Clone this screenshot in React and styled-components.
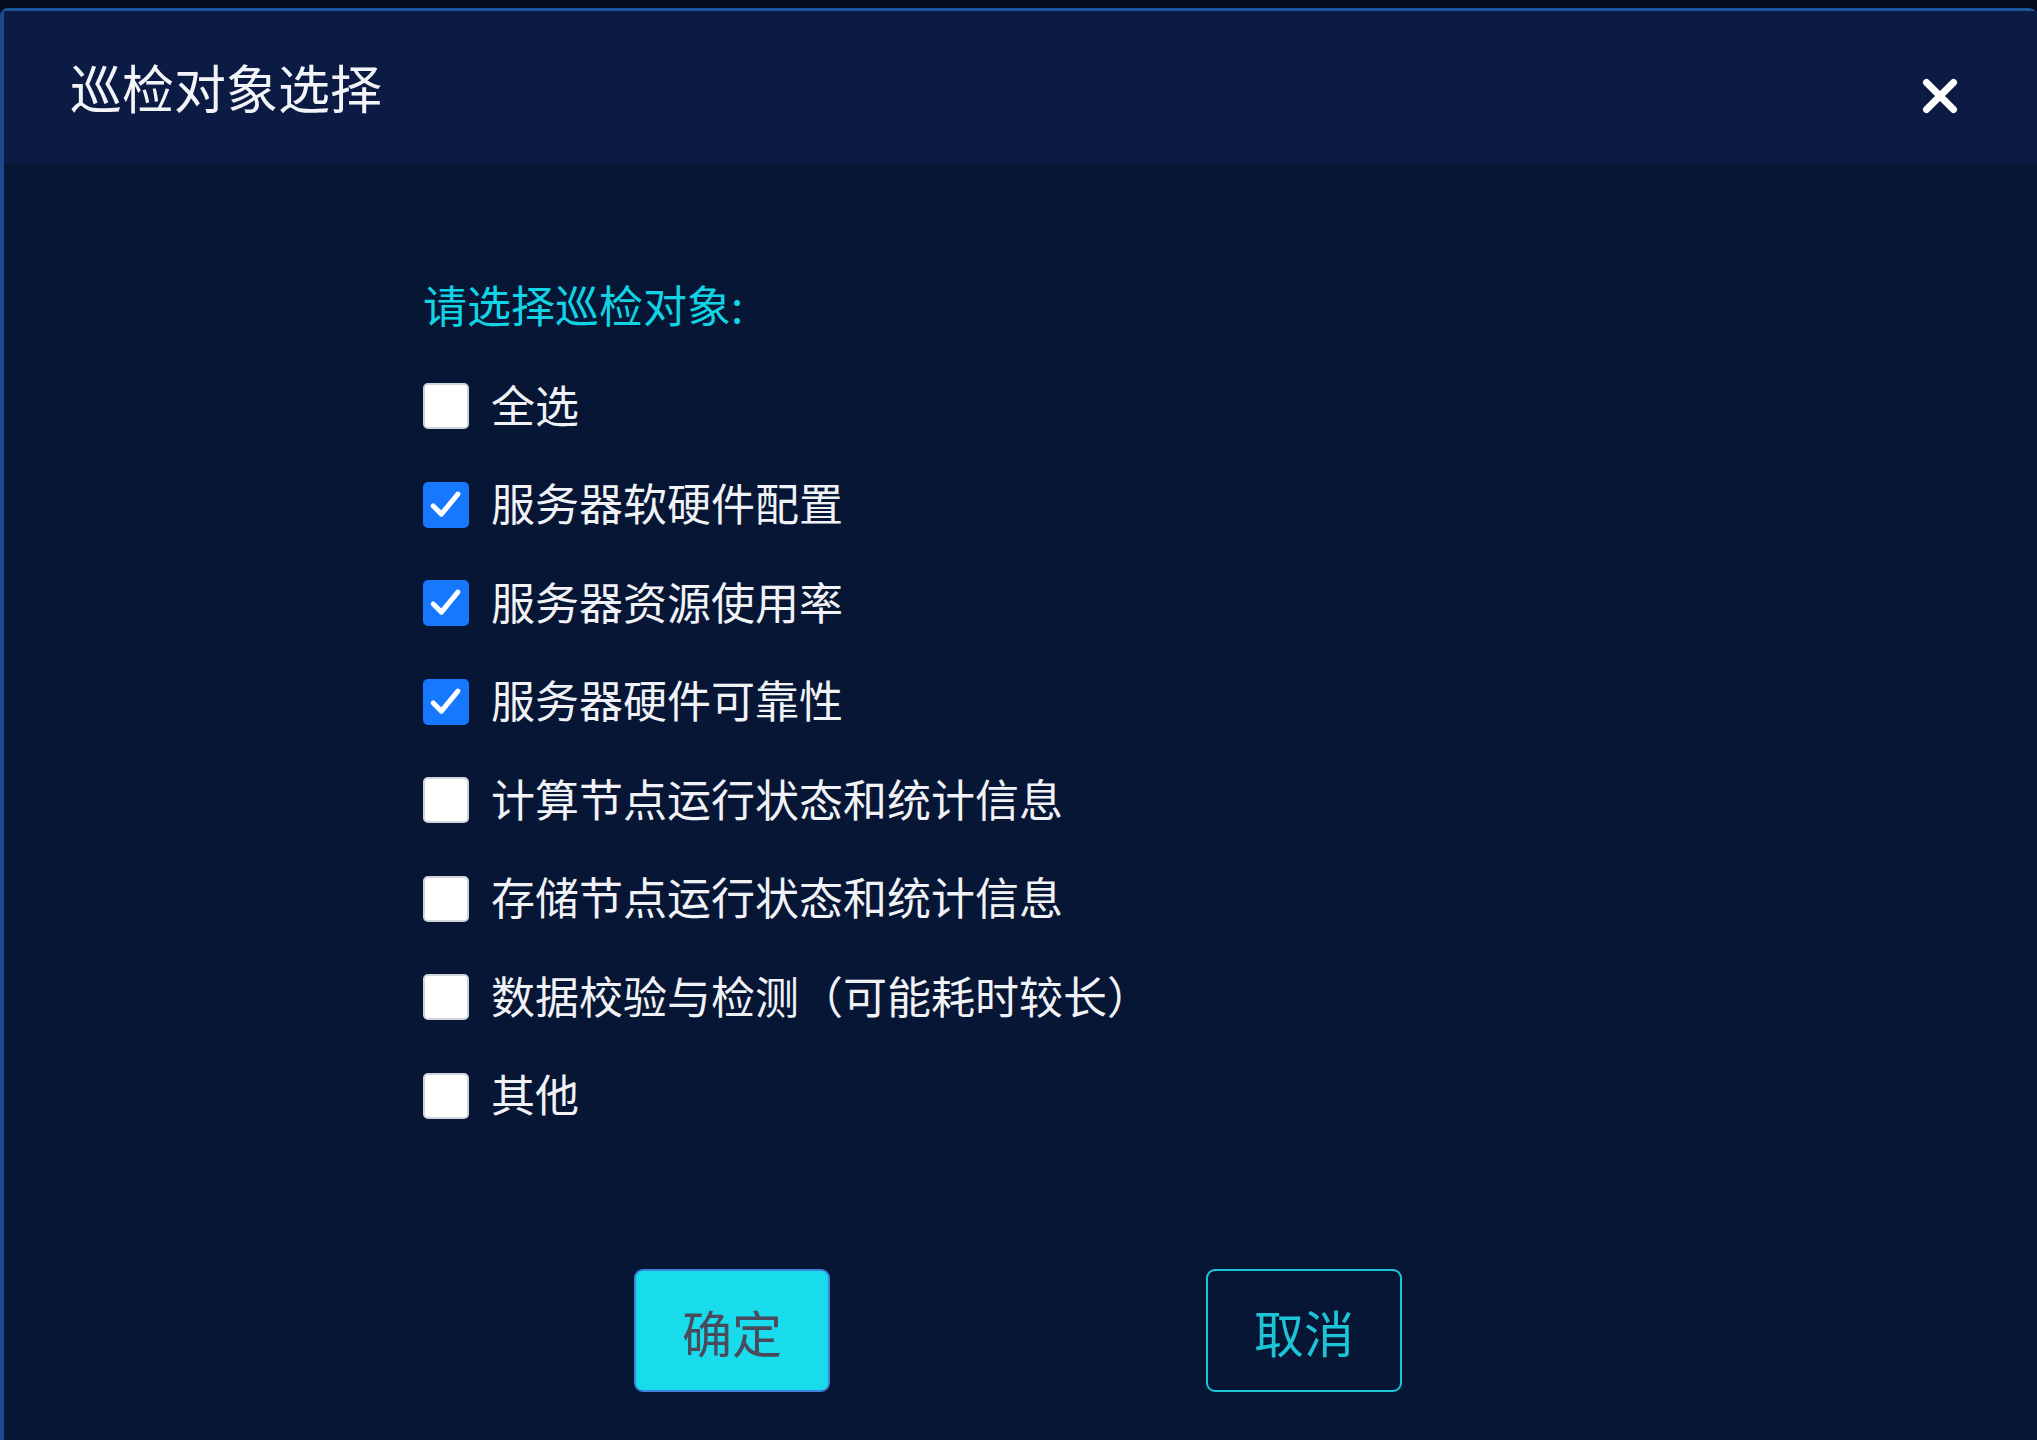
import React, { useState } from "react";
import styled, { createGlobalStyle } from "styled-components";

const GlobalStyle = createGlobalStyle`
  html, body {
    margin: 0;
    padding: 0;
    background: #030b1c;
    overflow: hidden;
  }
  * { box-sizing: border-box; }
  body {
    font-family: "Noto Sans CJK SC", "Noto Sans", "Liberation Sans", sans-serif;
  }
`;

const Page = styled.div`
  padding-top: 8px;
  min-height: 100vh;
`;

const Dialog = styled.section`
  display: flex;
  flex-direction: column;
  width: 100%;
  min-height: calc(100vh - 8px);
  background: #061634;
  border-top: 3px solid #1c569c;
  border-left: 4px solid #1a4b8c;
  border-top-left-radius: 8px;
  border-top-right-radius: 8px;
`;

const Header = styled.header`
  display: flex;
  align-items: center;
  justify-content: space-between;
  height: 152px;
  padding: 0 77px 0 66px;
  background: #0b1b44;
`;

const Title = styled.h2`
  margin: 0;
  font-size: 52px;
  line-height: 1;
  font-weight: 400;
  color: #f2f4f8;
`;

const CloseButton = styled.button`
  display: flex;
  align-items: center;
  justify-content: center;
  width: 40px;
  height: 40px;
  margin-top: 18px;
  padding: 0;
  border: none;
  background: transparent;
  cursor: pointer;
`;

const Body = styled.div`
  display: flex;
  flex-direction: column;
  padding-top: 111px;
`;

const Content = styled.div`
  display: flex;
  flex-direction: column;
  padding-left: 419px;
`;

const Prompt = styled.div`
  font-size: 44px;
  line-height: 60px;
  color: #12d3e4;
`;

const OptionList = styled.div`
  display: flex;
  flex-direction: column;
  margin-top: 23px;
`;

const OptionRow = styled.label`
  display: flex;
  align-items: center;
  height: 98.5px;
  cursor: pointer;
`;

const Box = styled.span`
  display: flex;
  align-items: center;
  justify-content: center;
  flex: none;
  width: 46px;
  height: 46px;
  border-radius: 5px;
  background: ${(p) => (p.$checked ? "#1677ff" : "#ffffff")};
  border: 2px solid ${(p) => (p.$checked ? "#1677ff" : "#cfd3da")};
`;

const OptionText = styled.span`
  margin-left: 22px;
  padding-bottom: 5px;
  font-size: 44px;
  line-height: 1;
  color: #f0f2f6;
  white-space: nowrap;
`;

const Footer = styled.div`
  display: flex;
  justify-content: center;
  gap: 376px;
  margin-top: 124px;
  padding-right: 5px;
`;

const ActionButton = styled.button`
  display: flex;
  align-items: center;
  justify-content: center;
  width: 196px;
  height: 123px;
  padding: 0;
  border-radius: 9px;
  font-family: inherit;
  font-size: 50px;
  cursor: pointer;
  background: ${(p) => (p.$primary ? "#18dcec" : "transparent")};
  color: ${(p) => (p.$primary ? "#4a4a5a" : "#1cc4d6")};
  border: 2px solid ${(p) => (p.$primary ? "#3a86dc" : "#1bc7d8")};
`;

const options = [
  { label: "全选", checked: false },
  { label: "服务器软硬件配置", checked: true },
  { label: "服务器资源使用率", checked: true },
  { label: "服务器硬件可靠性", checked: true },
  { label: "计算节点运行状态和统计信息", checked: false },
  { label: "存储节点运行状态和统计信息", checked: false },
  { label: "数据校验与检测（可能耗时较长）", checked: false },
  { label: "其他", checked: false },
];

const CheckMark = () => (
  <svg width="46" height="46" viewBox="0 0 46 46">
    <path
      d="M9 24 L18 33 L36 11"
      fill="none"
      stroke="#ffffff"
      strokeWidth="5.5"
      strokeLinecap="round"
      strokeLinejoin="round"
    />
  </svg>
);

const CloseIcon = () => (
  <svg width="40" height="40" viewBox="0 0 40 40">
    <path
      d="M6.5 6.5 L33.5 33.5 M33.5 6.5 L6.5 33.5"
      stroke="#ffffff"
      strokeWidth="7"
      strokeLinecap="round"
    />
  </svg>
);

export default function App() {
  const [items, setItems] = useState(options);
  const toggle = (i) =>
    setItems((prev) =>
      prev.map((o, j) => (j === i ? { ...o, checked: !o.checked } : o))
    );

  return (
    <Page>
      <GlobalStyle />
      <Dialog>
        <Header>
          <Title>巡检对象选择</Title>
          <CloseButton aria-label="关闭">
            <CloseIcon />
          </CloseButton>
        </Header>
        <Body>
          <Content>
            <Prompt>请选择巡检对象:</Prompt>
            <OptionList>
              {items.map((o, i) => (
                <OptionRow key={o.label} onClick={() => toggle(i)}>
                  <Box $checked={o.checked}>{o.checked && <CheckMark />}</Box>
                  <OptionText>{o.label}</OptionText>
                </OptionRow>
              ))}
            </OptionList>
          </Content>
          <Footer>
            <ActionButton $primary>确定</ActionButton>
            <ActionButton>取消</ActionButton>
          </Footer>
        </Body>
      </Dialog>
    </Page>
  );
}
